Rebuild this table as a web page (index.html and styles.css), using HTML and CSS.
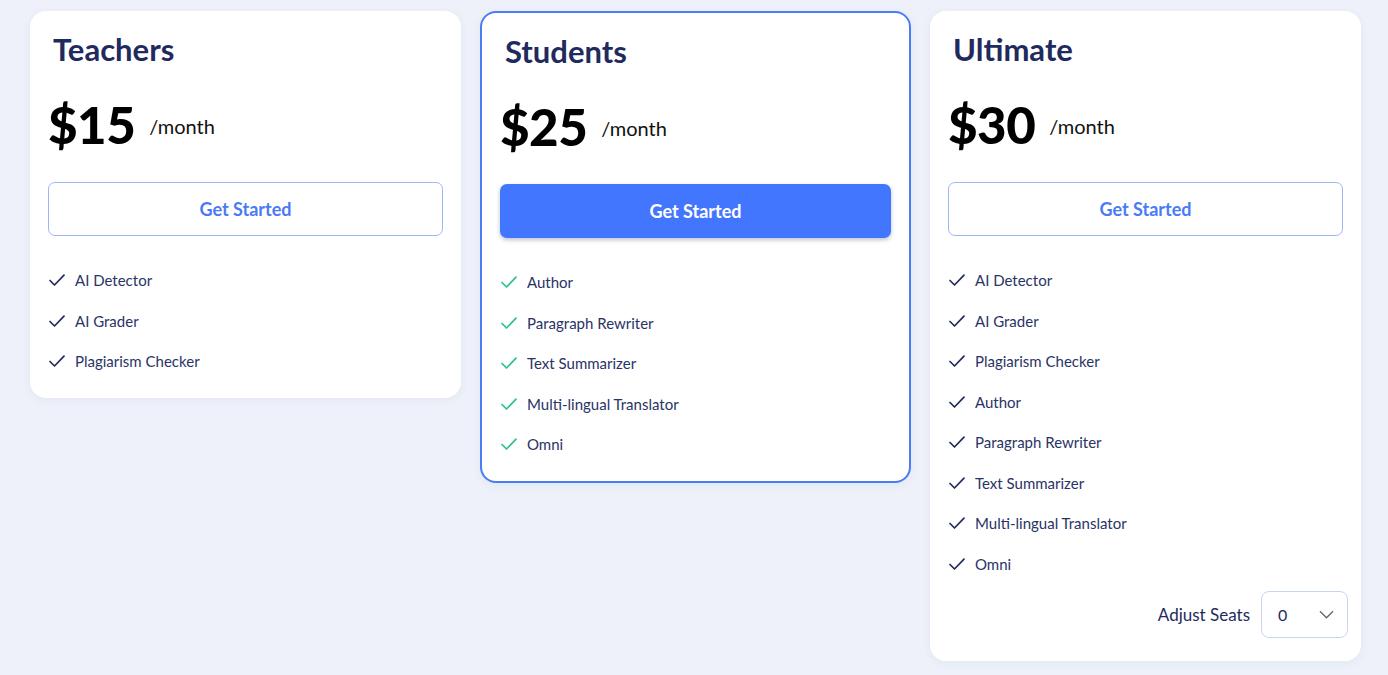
FILE: index.html
```html
<!DOCTYPE html>
<html lang="en">
<head>
<meta charset="utf-8">
<title>Pricing</title>
<link rel="stylesheet" href="styles.css">
</head>
<body>
<main class="plans">
  <section class="card">
    <h2 class="plan-name">Teachers</h2>
    <div class="price-row"><span class="price">$15</span><span class="per">/month</span></div>
    <button class="btn btn-outline">Get Started</button>
    <ul class="features">
      <li><svg class="check" viewBox="0 0 16 12"><path d="M1 6.5 L5.5 11 L15 1.2"/></svg>AI Detector</li>
      <li><svg class="check" viewBox="0 0 16 12"><path d="M1 6.5 L5.5 11 L15 1.2"/></svg>AI Grader</li>
      <li><svg class="check" viewBox="0 0 16 12"><path d="M1 6.5 L5.5 11 L15 1.2"/></svg>Plagiarism Checker</li>
    </ul>
  </section>
  <section class="card card-featured">
    <h2 class="plan-name">Students</h2>
    <div class="price-row"><span class="price">$25</span><span class="per">/month</span></div>
    <button class="btn btn-filled">Get Started</button>
    <ul class="features features-green">
      <li><svg class="check" viewBox="0 0 16 12"><path d="M1 6.5 L5.5 11 L15 1.2"/></svg>Author</li>
      <li><svg class="check" viewBox="0 0 16 12"><path d="M1 6.5 L5.5 11 L15 1.2"/></svg>Paragraph Rewriter</li>
      <li><svg class="check" viewBox="0 0 16 12"><path d="M1 6.5 L5.5 11 L15 1.2"/></svg>Text Summarizer</li>
      <li><svg class="check" viewBox="0 0 16 12"><path d="M1 6.5 L5.5 11 L15 1.2"/></svg>Multi-lingual Translator</li>
      <li><svg class="check" viewBox="0 0 16 12"><path d="M1 6.5 L5.5 11 L15 1.2"/></svg>Omni</li>
    </ul>
  </section>
  <section class="card">
    <h2 class="plan-name">Ultimate</h2>
    <div class="price-row"><span class="price">$30</span><span class="per">/month</span></div>
    <button class="btn btn-outline">Get Started</button>
    <ul class="features">
      <li><svg class="check" viewBox="0 0 16 12"><path d="M1 6.5 L5.5 11 L15 1.2"/></svg>AI Detector</li>
      <li><svg class="check" viewBox="0 0 16 12"><path d="M1 6.5 L5.5 11 L15 1.2"/></svg>AI Grader</li>
      <li><svg class="check" viewBox="0 0 16 12"><path d="M1 6.5 L5.5 11 L15 1.2"/></svg>Plagiarism Checker</li>
      <li><svg class="check" viewBox="0 0 16 12"><path d="M1 6.5 L5.5 11 L15 1.2"/></svg>Author</li>
      <li><svg class="check" viewBox="0 0 16 12"><path d="M1 6.5 L5.5 11 L15 1.2"/></svg>Paragraph Rewriter</li>
      <li><svg class="check" viewBox="0 0 16 12"><path d="M1 6.5 L5.5 11 L15 1.2"/></svg>Text Summarizer</li>
      <li><svg class="check" viewBox="0 0 16 12"><path d="M1 6.5 L5.5 11 L15 1.2"/></svg>Multi-lingual Translator</li>
      <li><svg class="check" viewBox="0 0 16 12"><path d="M1 6.5 L5.5 11 L15 1.2"/></svg>Omni</li>
    </ul>
    <div class="seats">
      <span class="seats-label">Adjust Seats</span>
      <div class="select"><span>0</span><svg class="chev" viewBox="0 0 16 9"><path d="M1 1 L8 8 L15 1"/></svg></div>
    </div>
  </section>
</main>
</body>
</html>
```
FILE: styles.css
```css
* { box-sizing: border-box; }
html, body { margin: 0; padding: 0; }
body {
  background: #eef1f9;
  font-family: Lato, "Noto Sans", sans-serif;
  color: #1f2a5e;
  height: 675px;
  overflow: hidden;
}
.plans {
  display: grid;
  grid-template-columns: 431px 431px 431px;
  column-gap: 19px;
  align-items: start;
  padding: 11px 0 0 30px;
}
.card {
  background: #fff;
  border-radius: 16px;
  padding: 18px 18px 16px;
  box-shadow: 0 2px 10px rgba(40, 60, 120, 0.06);
}
.card-featured {
  border: 2px solid #4a7cf6;
}
.plan-name {
  margin: 0;
  padding-left: 5px;
  font-size: 31px;
  line-height: 40px;
  font-weight: 700;
  color: #1f2a5e;
}
.price-row {
  display: flex;
  align-items: center;
  gap: 14px;
  margin-top: 26px;
  height: 60px;
}
.price {
  font-size: 51px;
  line-height: 60px;
  font-weight: 900;
  color: #000;
  letter-spacing: -0.5px;
}
.per {
  font-size: 20px;
  line-height: 24px;
  color: #111;
  margin-top: 2px;
}
.btn {
  display: block;
  width: 100%;
  height: 54px;
  margin-top: 27px;
  border-radius: 7px;
  font-family: inherit;
  font-size: 18px;
  font-weight: 700;
  cursor: pointer;
}
.btn-outline {
  background: #fff;
  border: 1px solid #9db7f5;
  color: #4a7bf5;
}
.btn-filled {
  background: #4376fe;
  border: none;
  color: #fff;
  box-shadow: 0 2px 4px rgba(20, 40, 90, 0.28);
}
.features {
  list-style: none;
  margin: 24px 0 0;
  padding: 0;
}
.features li {
  display: flex;
  align-items: center;
  gap: 10px;
  padding: 8px 0 8px 1px;
  line-height: 24.5px;
  font-size: 15px;
  color: #2a3366;
}
.check {
  width: 16px;
  height: 12px;
  flex: none;
  fill: none;
  stroke: #222b5e;
  stroke-width: 1.7;
  stroke-linecap: round;
  stroke-linejoin: round;
}
.features-green .check { stroke: #2cc28a; }
.seats {
  display: flex;
  justify-content: flex-end;
  align-items: center;
  gap: 11px;
  margin: 7px -5px 7px 0;
}
.seats-label {
  font-size: 17px;
  color: #1f2a5e;
}
.select {
  width: 87px;
  height: 47px;
  border: 1px solid #c7d4f6;
  border-radius: 8px;
  display: flex;
  align-items: center;
  justify-content: space-between;
  padding: 0 13px 0 16px;
  font-size: 16px;
  color: #1f2a5e;
}
.chev {
  width: 15px;
  height: 9px;
  fill: none;
  stroke: #666;
  stroke-width: 1.4;
}
```
